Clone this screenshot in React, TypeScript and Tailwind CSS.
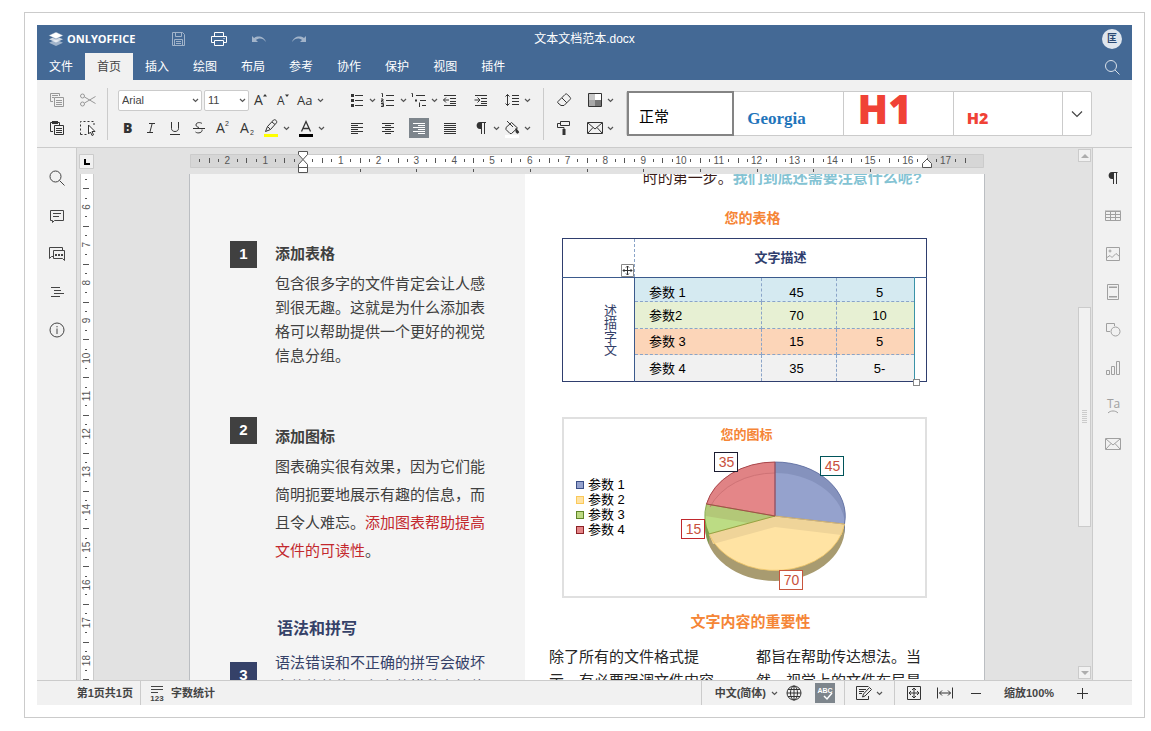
import React, { useState } from "react";

import { clsx } from "clsx";

type IconProps = { children: React.ReactNode; className?: string };

function Icon({ children, className }: IconProps) {
	return (
		<svg
			viewBox="0 0 20 20"
			fill="none"
			stroke="currentColor"
			aria-hidden="true"
			className={clsx("size-5 shrink-0", className)}
		>
			{children}
		</svg>
	);
}

function Chevron() {
	return (
		<svg viewBox="0 0 11 20" fill="none" stroke="#555" className="h-5 w-[11px] shrink-0" aria-hidden="true">
			<path d="M3 9l2.5 2.5L8 9" strokeWidth="1.2" />
		</svg>
	);
}

type ToolProps = {
	label: string;
	children: React.ReactNode;
	menu?: boolean;
	active?: boolean;
	muted?: boolean;
};

function Tool({ label, children, menu, active, muted }: ToolProps) {
	return (
		<button
			type="button"
			aria-label={label}
			title={label}
			className={clsx("flex h-5 shrink-0 items-center", muted ? "text-[#989898]" : "text-[#333]")}
		>
			<span className={clsx("block size-5", active && "bg-[#7d858c] text-white")}>
				<Icon>{children}</Icon>
			</span>
			{menu && <Chevron />}
		</button>
	);
}

function Separator() {
	return <div className="h-[52px] w-px shrink-0 bg-[#cbcbcb]" />;
}

const TABS = ["文件", "首页", "插入", "绘图", "布局", "参考", "协作", "保护", "视图", "插件"];

function Header() {
	const [tab, setTab] = useState("首页");

	return (
		<header className="bg-[#446995] text-xs text-white">
			<div className="grid h-7 grid-cols-[1fr_auto_1fr] items-center">
				<div className="flex items-center pl-[11px]">
					<svg viewBox="0 0 16 16" className="size-4" aria-hidden="true">
						<path d="M8 8.6l7 3.1-7 3.3-7-3.3z" fill="#fff" opacity=".5" />
						<path d="M8 5.2l7 3.1-7 3.3-7-3.3z" fill="#fff" opacity=".75" />
						<path d="M8 1l7.4 3.5L8 8 .6 4.5z" fill="#fff" stroke="#446995" strokeWidth=".5" />
					</svg>
					<span className="w-[104px] pl-[3px] font-[Open_Sans,sans-serif] text-[11px] font-bold">
						ONLYOFFICE
					</span>
					<div className="flex gap-5">
						<button type="button" aria-label="保存" className="opacity-50">
							<Icon>
								<path d="M4.500 3.500h10l2 2v11h-12zM7.500 3.500v4h6v-4M6.500 16.500v-6h8v6M8 12.500h5M8 14.500h5" />
							</Icon>
						</button>
						<button type="button" aria-label="打印">
							<Icon>
								<path d="M6.500 7V3.500h9V7M6.500 13.500h-3v-6h15v6h-3M6.500 11.500h9v5h-9zM15.500 9.500h1" />
							</Icon>
						</button>
						<button type="button" aria-label="撤销" className="opacity-50">
							<Icon>
								<path d="M4 7v6h6L8 11c3-2.500 7-2 10 2-1.500-5-7.500-7-12-4z" fill="currentColor" stroke="none" />
							</Icon>
						</button>
						<button type="button" aria-label="重做" className="opacity-50">
							<Icon>
								<path d="M18 7v6h-6l2-2c-3-2.500-7-2-10 2 1.500-5 7.500-7 12-4z" fill="currentColor" stroke="none" />
							</Icon>
						</button>
					</div>
				</div>
				<h1>文本文档范本.docx</h1>
				<div className="flex justify-end pr-[10px]">
					<span className="flex size-5 items-center justify-center rounded-full bg-[#dfe6ee] text-[10px] leading-none font-bold text-[#2b4a73]">
						匡
					</span>
				</div>
			</div>
			<div className="flex h-[27px] items-stretch justify-between">
				<nav className="flex">
					{TABS.map((name) => (
						<button
							key={name}
							type="button"
							onClick={() => setTab(name)}
							className={clsx("px-3", tab === name && "bg-[#f1f1f1] text-[#444]")}
						>
							{name}
						</button>
					))}
				</nav>
				<button type="button" aria-label="搜索" className="pr-[10px]">
					<Icon className="opacity-80">
						<circle cx="9" cy="9" r="5.500" />
						<path d="M13 13l4.500 4.500" />
					</Icon>
				</button>
			</div>
		</header>
	);
}

function SelectBox({ label, value, className }: { label: string; value: string; className: string }) {
	return (
		<div
			className={clsx(
				"flex h-[21px] shrink-0 items-center rounded-xs border border-[#cbcbcb] bg-white text-[#444]",
				className,
			)}
		>
			<select aria-label={label} className="h-full min-w-0 flex-1 appearance-none pl-[3px] text-[11px] outline-none">
				<option>{value}</option>
			</select>
			<Chevron />
		</div>
	);
}

function FontTools() {
	return (
		<div className="flex w-[209px] flex-col gap-2">
			<div className="flex h-5 items-center gap-[2px]">
				<SelectBox label="字体" value="Arial" className="ml-px w-[84px]" />
				<SelectBox label="字号" value="11" className="w-[45px]" />
				<Tool label="增大字号">
					<text x="3" y="15" fontSize="14" fill="currentColor" stroke="none" className="font-[Open_Sans,sans-serif]">A</text>
					<path d="M12 6.500l2-2.500 2 2.500z" fill="currentColor" stroke="none" />
				</Tool>
				<Tool label="减小字号">
					<text x="4" y="15" fontSize="12" fill="currentColor" stroke="none" className="font-[Open_Sans,sans-serif]">A</text>
					<path d="M12 4.500l2 2.500 2-2.500z" fill="currentColor" stroke="none" />
				</Tool>
				<Tool label="更改大小写" menu>
					<text x="2" y="15" fontSize="13" fill="currentColor" stroke="none" className="font-[Open_Sans,sans-serif]">Aa</text>
				</Tool>
			</div>
			<div className="flex h-5 gap-1">
				<Tool label="加粗">
					<text x="6" y="15" fontSize="14" fontWeight="800" fill="currentColor" stroke="none" className="font-[Open_Sans,sans-serif]">B</text>
				</Tool>
				<Tool label="斜体">
					<path d="M8 5.500h6M6 14.500h6M11.200 5.500l-2.400 9" />
				</Tool>
				<Tool label="下划线">
					<path d="M6.500 4v6.500c0 4 7 4 7 0V4M5 16.500h10" />
				</Tool>
				<Tool label="删除线">
					<path d="M13 5.500c-1.500-1.300-6-1.500-6 1.500 0 1.500 1.500 2 3 2.500M4 10.500h12M13 11.500c1 3-4 4.500-6.500 2.500" />
				</Tool>
				<Tool label="上标">
					<text x="3" y="15" fontSize="14" fill="currentColor" stroke="none" className="font-[Open_Sans,sans-serif]">A</text>
					<text x="12" y="8" fontSize="7" fill="currentColor" stroke="none">2</text>
				</Tool>
				<Tool label="下标">
					<text x="3" y="15" fontSize="14" fill="currentColor" stroke="none" className="font-[Open_Sans,sans-serif]">A</text>
					<text x="13" y="17" fontSize="7" fill="currentColor" stroke="none">2</text>
				</Tool>
				<Tool label="高亮颜色" menu>
					<path d="M4.500 13.500l2-5 6-6.500c1.500-1 4 .8 3 2.800l-6 6.700zM6.500 8.500l3 3M11 4l3 2.500" />
					<path d="M3 16h14v3H3z" fill="#ff0" stroke="none" />
				</Tool>
				<Tool label="字体颜色" menu>
					<path d="M5.500 13.500l4.500-10 4.500 10M7 10.500h6" strokeWidth="1.300" />
					<path d="M3 16h14v3H3z" fill="#000" stroke="none" />
				</Tool>
			</div>
		</div>
	);
}

function ParagraphTools() {
	return (
		<div className="grid grid-cols-[repeat(6,31px)] gap-y-2">
			<Tool label="项目符号" menu>
				<path d="M8 5.500h8M8 10.500h8M8 15.500h8" />
				<path d="M4 4h3v3H4zM4 9h3v3H4zM4 14h3v3H4z" fill="currentColor" stroke="none" />
			</Tool>
			<Tool label="编号" menu>
				<path d="M8 5.500h8M8 10.500h8M8 15.500h8M3.500 3.500h1V7M3 9h2v1.500H3.500V12H6M3 13.500h2.500v3H3M3.500 15h2" />
			</Tool>
			<Tool label="多级列表" menu>
				<path d="M7 5.500h9M11 10.500h6M13 15.500h4M2.500 3.500h1V7M10.500 12.500V17" />
				<path d="M6 9.500h2v2H6z" fill="currentColor" stroke="none" />
			</Tool>
			<Tool label="减少缩进">
				<path d="M4 5.500h12M10 8.500h6M10 11.500h6M4 15.500h12M10 13.500h6M3.500 10h5.500M6 7.500L3.500 10 6 12.500" />
			</Tool>
			<Tool label="增加缩进">
				<path d="M4 5.500h12M10 8.500h6M10 11.500h6M4 15.500h12M10 13.500h6M3.500 10H9M6.500 7.500L9 10l-2.500 2.500" />
			</Tool>
			<Tool label="行间距" menu>
				<path d="M10 5.500h7M10 8.500h7M10 11.500h7M10 14.500h7M5.500 4.500v11M3.500 6.500l2-2 2 2M3.500 13.500l2 2 2-2" />
			</Tool>
			<Tool label="左对齐">
				<path d="M4 5.500h12M4 7.500h7M4 9.500h12M4 11.500h7M4 13.500h12M4 15.500h7" />
			</Tool>
			<Tool label="居中">
				<path d="M4 5.500h12M7 7.500h6M4 9.500h12M7 11.500h6M4 13.500h12M7 15.500h6" />
			</Tool>
			<Tool label="右对齐" active>
				<path d="M4 5.500h12M9 7.500h7M4 9.500h12M9 11.500h7M4 13.500h12M9 15.500h7" />
			</Tool>
			<Tool label="两端对齐">
				<path d="M4 5.500h12M4 7.500h12M4 9.500h12M4 11.500h12M4 13.500h12M4 15.500h12" />
			</Tool>
			<Tool label="非打印字符" menu>
				<path d="M9 4.500h6M10.500 4v12M13.500 4v12" />
				<path d="M10.500 4v7H9c-4.500 0-4.500-7 0-7z" fill="currentColor" stroke="none" />
			</Tool>
			<Tool label="底纹" menu>
				<path d="M4 9.500l5.500-5 6 5.500-6 5.500H8l-4-4zM5 3l6 6" />
				<path d="M14 10.500l2.500 3c1 2-2.500 2.500-2.500 0z" fill="currentColor" />
				<path d="M3 17h14v3H3z" fill="#fff" stroke="none" />
			</Tool>
		</div>
	);
}

function EnvelopeIcon() {
	return <path d="M2.500 4.500h15v11h-15zM3 5l7 6 7-6M3 15l5-5.500M17 15l-5-5.500" />;
}

function StyleGallery() {
	return (
		<div className="mt-px flex h-[45px] min-w-0 flex-1 rounded-xs border border-[#cbcbcb] bg-white">
			<button
				type="button"
				className="-my-px -mr-[2px] flex flex-1 items-center pt-2 pl-3 text-[15px] text-black ring-2 ring-[#848484] ring-inset"
			>
				正常
			</button>
			<button
				type="button"
				className="flex flex-1 items-center pt-[10px] pl-[15px] font-[Liberation_Serif,serif] text-[17px] font-bold text-[#1f75bb]"
			>
				Georgia
			</button>
			<button
				type="button"
				className="flex flex-1 items-center border-l border-[#cbcbcb] pb-[9px] pl-[14px] font-[Open_Sans,sans-serif] text-[40px] leading-none font-extrabold text-[#f04236]"
			>
				H1
			</button>
			<button
				type="button"
				className="flex flex-1 items-center border-l border-[#cbcbcb] pt-2 pl-[13px] font-[Open_Sans,sans-serif] text-base font-extrabold text-[#f04236]"
			>
				H2
			</button>
			<button
				type="button"
				aria-label="更多样式"
				className="flex w-[29px] items-center justify-center border-l border-[#cbcbcb] text-[#444]"
			>
				<Icon>
					<path d="M5 7.500l5 5 5-5" strokeWidth="1.200" />
				</Icon>
			</button>
		</div>
	);
}

function Toolbar() {
	return (
		<div className="flex h-[68px] shrink-0 items-start border-b border-[#cbcbcb] bg-[#f1f1f1] pt-2 pr-10 pl-[10px]">
			<div className="mt-[2px] mr-[9px] grid grid-cols-2 gap-x-[11px] gap-y-2">
				<Tool label="复制" muted>
					<path d="M6 11.500H3.500v-8h9V6M5 5.500h6M5 7.500h2M7.500 7.500h9v9h-9zM9 10.500h6M9 12.500h6M9 14.500h6" />
				</Tool>
				<Tool label="剪切" muted>
					<circle cx="4.500" cy="6" r="2" />
					<circle cx="4.500" cy="14" r="2" />
					<path d="M6.500 7l11 6.500M6.500 13l11-6.500" />
				</Tool>
				<Tool label="粘贴">
					<path d="M6 13.500H3.500v-9h9V7M7.500 7.500h9v9h-9zM9 10.500h6M9 12.500h6M9 14.500h6" />
					<path d="M5 3h6v3H5z" fill="currentColor" stroke="none" />
				</Tool>
				<Tool label="全选">
					<path d="M2.500 16.500h7M2.500 16.500v-13h13.500V7" strokeDasharray="2 2" />
					<path d="M10.500 7v9l2-2 1.500 3.500 1.500-.7-1.500-3.300h3z" fill="#fff" />
				</Tool>
			</div>
			<Separator />
			<div className="mt-[2px] mr-[21px] ml-[9px]">
				<FontTools />
			</div>
			<div className="mt-[2px] mr-[10px]">
				<ParagraphTools />
			</div>
			<Separator />
			<div className="mx-[10px] mt-[2px] grid grid-cols-[repeat(2,31px)] gap-y-2">
				<Tool label="清除样式">
					<path d="M4 11.500l7-7c1-.8 1.500-.8 2.300 0l2.700 2.700c.8.800.8 1.500 0 2.300l-6 6H7l-3-2.500c-.5-.5-.5-1 0-1.500zM8 8l4.800 4.800" />
				</Tool>
				<Tool label="更改配色方案" menu>
					<path d="M4 4h6v6H4z" fill="#c8c8c8" stroke="none" />
					<path d="M10 4h6v6h-6z" fill="#fff" stroke="none" />
					<path d="M4 10h6v6H4z" fill="#a8a8a8" stroke="none" />
					<path d="M10 10h6v6h-6z" fill="#777" stroke="none" />
					<path d="M3.500 3.500h13v13h-13z" />
				</Tool>
				<Tool label="复制样式">
					<path d="M6.500 3.500h9v4h-9zM6.500 5.500h-3v4h6.500v2" />
					<path d="M8.500 11h3v6h-3z" fill="currentColor" stroke="none" />
				</Tool>
				<Tool label="邮件合并" menu>
					<EnvelopeIcon />
				</Tool>
			</div>
			<div className="mt-[2px] flex min-w-0 flex-1">
				<StyleGallery />
			</div>
		</div>
	);
}

function SideButton({ label, children }: { label: string; children: React.ReactNode }) {
	return (
		<button type="button" aria-label={label} className="flex h-[38px] w-full shrink-0 items-center justify-center">
			<Icon>{children}</Icon>
		</button>
	);
}

function LeftBar() {
	return (
		<aside className="w-10 shrink-0 overflow-hidden border-r border-[#cbcbcb] bg-[#f1f1f1] pt-[11px] text-[#444]">
			<SideButton label="查找">
				<circle cx="8.500" cy="8.500" r="5.500" />
				<path d="M12.500 12.500l5 5" />
			</SideButton>
			<SideButton label="批注">
				<path d="M3.500 4.500h13v10h-9L5.500 16.500v-2h-2zM6 7.500h8M6 10.500h6" />
			</SideButton>
			<SideButton label="聊天">
				<path d="M6 12.500H4.500l-2 2v-11h13V6M6.500 6.500h11v10l-2-2h-9z" />
				<path d="M8 10h2v2H8zM11 10h2v2h-2zM14 10h2v2h-2z" fill="currentColor" stroke="none" />
			</SideButton>
			<SideButton label="导航">
				<path d="M4 5.500h9M7 8.500h7M7 11.500h10M4 14.500h9" />
			</SideButton>
			<SideButton label="关于">
				<circle cx="10" cy="10" r="7" />
				<path d="M10 8.500V14M10 6v1.300" />
			</SideButton>
		</aside>
	);
}

function RightBar() {
	return (
		<aside className="w-10 shrink-0 overflow-hidden border-l border-[#cbcbcb] bg-[#f1f1f1] pt-[11px] text-[#a0a0a0]">
			<div className="text-[#333]">
				<SideButton label="段落设置">
					<path d="M9 4.500h5.500M10.500 4v12M13.500 4v12" />
					<path d="M10.500 4v7H9C4.500 11 4.500 4 9 4z" fill="currentColor" stroke="none" />
				</SideButton>
			</div>
			<SideButton label="表格设置">
				<path d="M2.500 5.500h15v9h-15zM2.500 8.500h15M2.500 11.500h15M7.500 5v10M12.500 5v10M2 5h16" />
			</SideButton>
			<SideButton label="图片设置">
				<path d="M3.500 3.500h13v13h-13zM4 13.500l3-2 2 2 4-4 3.500 3" />
				<circle cx="7" cy="7" r="1" />
			</SideButton>
			<SideButton label="页眉页脚">
				<path d="M4.500 2.500h11v15h-11z" />
				<path d="M6 4.500h8v1.500H6zM6 14h8v1.500H6z" fill="currentColor" stroke="none" />
			</SideButton>
			<SideButton label="形状设置">
				<path d="M7 11.500H3.500v-8h8V6" />
				<circle cx="12.500" cy="11.500" r="4.500" />
			</SideButton>
			<SideButton label="图表设置">
				<path d="M3.500 12.500h3v4h-3zM8.500 8.500h3v8h-3zM13.500 3.500h3v13h-3z" />
			</SideButton>
			<SideButton label="艺术字设置">
				<text x="4" y="12" fontSize="12" fill="currentColor" stroke="none" className="font-[Open_Sans,sans-serif]">Ta</text>
				<path d="M5 17c2.500-2.700 7.500-2.700 10 0" />
			</SideButton>
			<SideButton label="邮件合并设置">
				<EnvelopeIcon />
			</SideButton>
		</aside>
	);
}

// one centimetre on screen
const CM = 37.8;

function HorizontalRuler() {
	const zero = 114;
	const quarters = Array.from({ length: 82 }, (_, i) => i - 11);

	return (
		<svg viewBox="0 0 796 26" className="h-[26px] w-[796px] shrink-0" aria-hidden="true">
			<path d="M1.500 6.500h793v13h-793z" fill="#d6d6d6" stroke="#cbcbcb" />
			<path d="M114 7h624v12H114z" fill="#fff" />
			{quarters.map((q) => {
				const x = zero + (q * CM) / 4;
				if (q === 0) return null;
				if (q % 4 === 0) {
					return (
						<text key={q} x={x} y="16" fontSize="10" fill="#555" textAnchor="middle">
							{Math.abs(q / 4)}
						</text>
					);
				}
				const half = q % 2 === 0;
				return (
					<rect key={q} x={Math.round(x)} y={half ? 10 : 11} width="1" height={half ? 5 : 3} fill="#555" />
				);
			})}
			{Array.from({ length: 10 }, (_, i) => (
				<rect key={i} x={Math.round(zero + (i + 1) * CM * 1.5)} y="21" width="1" height="3" fill="#555" />
			))}
			<path d="M109.500 3.500h9v3l-4.500 5-4.500-5zM109.500 24.500v-8l4.500-5 4.500 5v8zM109.500 19.500h9" fill="#fff" stroke="#555" />
			<path d="M733.500 19.500v-4l4.500-4.500 4.500 4.500v4z" fill="#fff" stroke="#555" />
		</svg>
	);
}

function VerticalRuler() {
	const quarters = Array.from({ length: 54 }, (_, i) => i + 21);

	return (
		<svg className="h-full w-[14px]" aria-hidden="true">
			<rect width="14" height="100%" fill="#fff" />
			<path d="M.5 0v2000M13.500 0v2000" stroke="#cbcbcb" />
			{quarters.map((q) => {
				const y = 33 + (q / 4 - 6) * CM;
				if (q % 4 === 0) {
					return (
						<text key={q} fontSize="10" fill="#555" textAnchor="middle" transform={`translate(10 ${y}) rotate(-90)`}>
							{q / 4}
						</text>
					);
				}
				const half = q % 2 === 0;
				return (
					<rect key={q} x={half ? 3 : 5} y={Math.round(y)} width={half ? 6 : 2} height="1" fill="#555" />
				);
			})}
		</svg>
	);
}

type SectionProps = { number: number; className?: string; badge: string; children: React.ReactNode };

function Section({ number, className, badge, children }: SectionProps) {
	return (
		<section className={clsx("flex items-start", className)}>
			<span
				className={clsx(
					"flex h-[27px] w-[27px] shrink-0 items-center justify-center text-[15px] font-bold text-white",
					badge,
				)}
			>
				{number}
			</span>
			<div className="ml-[18px] shrink-0 whitespace-nowrap">{children}</div>
		</section>
	);
}

function Sidebar() {
	return (
		<div className="w-[335px] shrink-0 bg-[#f4f4f4] pt-[67px] pl-10 text-[15px] text-[#404040]">
			<Section number={1} badge="bg-[#404040]">
				<h2 className="mt-px mb-[6px] leading-6 font-bold">添加表格</h2>
				<p className="leading-6">
					包含很多字的文件肯定会让人感
					<br />
					到很无趣。这就是为什么添加表
					<br />
					格可以帮助提供一个更好的视觉
					<br />
					信息分组。
				</p>
			</Section>
			<Section number={2} badge="bg-[#404040]" className="mt-[49px]">
				<h2 className="mt-2 mb-1 leading-6 font-bold">添加图标</h2>
				<p className="leading-7">
					图表确实很有效果，因为它们能
					<br />
					简明扼要地展示有趣的信息，而
					<br />
					且令人难忘。
					<span className="text-[#c3282d]">
						添加图表帮助提高
						<br />
						文件的可读性
					</span>
					。
				</p>
			</Section>
			<h2 className="mt-[52px] ml-[47px] text-base leading-6 font-bold text-[#354168]">语法和拼写</h2>
			<Section number={3} badge="mt-[11px] bg-[#354168]" className="mt-[10px]">
				<p className="leading-6 text-[#354168]">
					语法错误和不正确的拼写会破坏
					<br />
					文件的整体，在文件措辞上加倍
				</p>
			</Section>
		</div>
	);
}

const ROWS = [
	{ name: "参数 1", a: "45", b: "5", className: "h-[24px] bg-[#d5eaf1]", pad: "pt-[6px]" },
	{ name: "参数2", a: "70", b: "10", className: "h-[27px] bg-[#e7f0d3]", pad: "pt-px" },
	{ name: "参数 3", a: "15", b: "5", className: "h-[26px] bg-[#fcd5b8]", pad: "pt-px" },
	{ name: "参数 4", a: "35", b: "5-", className: "h-[27px] bg-[#f1f1f1]", pad: "pt-px" },
];

function DataTable() {
	const dashed = "border border-dashed border-[#8aa4c8] pb-0";

	return (
		<div className="relative">
			<table className="w-full table-fixed border-collapse border border-[#2f3e6e] text-[13px] leading-4 text-black">
				<colgroup>
					<col className="w-[72px]" />
					<col className="w-[127px]" />
					<col className="w-[75px]" />
					<col className="w-[78px]" />
					<col />
				</colgroup>
				<tbody>
					<tr className="h-[39px] border-b border-[#3b5a8c]">
						<td className="border-r border-dashed border-r-[#8aa4c8] p-0" />
						<th colSpan={4} className="p-0 font-bold text-[#2f3e6e]">
							文字描述
						</th>
					</tr>
					{ROWS.map((row, i) => (
						<tr key={row.name}>
							{i === 0 && (
								<th rowSpan={4} className="border-r border-[#3b5a8c] p-0 pl-[22px] font-normal text-[#354168]">
									<span className="inline-block align-middle leading-none [writing-mode:vertical-rl]">
										述描字文
									</span>
								</th>
							)}
							<td className={clsx(dashed, "border-l-0 pr-0 pl-[14px]", row.className, row.pad)}>{row.name}</td>
							<td className={clsx(dashed, "pr-[5px] pl-0 text-center", row.className, row.pad)}>{row.a}</td>
							<td className={clsx(dashed, "border-r-0 pr-0 pl-2 text-center", row.className, row.pad)}>{row.b}</td>
							{i === 0 && <td rowSpan={4} className="border-l border-[#3a93a8] p-0" />}
						</tr>
					))}
				</tbody>
			</table>
			<svg viewBox="0 0 13 13" fill="none" className="absolute top-[26px] left-[59px] size-[13px]" aria-hidden="true">
				<path d="M.5.5h12v12H.5z" fill="#fff" stroke="#888" />
				<path d="M6.500 2v9M2 6.500h9M5 3.500l1.500-1.500L8 3.500M5 9.500L6.500 11 8 9.500M3.500 5L2 6.500 3.500 8M9.500 5L11 6.500 9.500 8" stroke="#333" />
			</svg>
			<span className="absolute right-[7px] -bottom-1 size-[7px] border border-[#888] bg-white" />
		</div>
	);
}

const LEGEND = [
	{ name: "参数 1", className: "border-[#3b4f87] bg-[#95a2cd]" },
	{ name: "参数 2", className: "border-[#fbc95a] bg-[#ffe3a3]" },
	{ name: "参数 3", className: "border-[#5f8428] bg-[#bcd982]" },
	{ name: "参数 4", className: "border-[#8c2226] bg-[#e48688]" },
];

const LABELS = [
	{ value: 35, x: 38.5, y: 7.5, stroke: "#1b1b30" },
	{ value: 45, x: 144.5, y: 11.5, stroke: "#00545a" },
	{ value: 15, x: 5.5, y: 74.5, stroke: "#c0282d" },
	{ value: 70, x: 103.5, y: 125.5, stroke: "#c8553d" },
];

function PieChart() {
	return (
		<svg viewBox="0 0 180 151" className="h-[151px] w-[180px] shrink-0" aria-hidden="true">
			{/* side wall */}
			<path d="M29 71v11A70 54 0 0 0 169 82V71z" fill="#a89b70" />
			<path d="M29 71v11A70 54 0 0 0 33 99V89z" fill="#7f9c50" />
			<path d="M169 71v11l-1 7v-11z" fill="#6c7796" />
			{/* slices */}
			<path d="M99 71V17A70 54 0 0 1 168.500 79z" fill="#95a2cd" />
			<path d="M99 71L168.500 79A70 54 0 0 1 33 89z" fill="#ffe3a3" />
			<path d="M99 71L33 89A70 54 0 0 1 30.500 59z" fill="#bcdc84" />
			<path d="M99 71L30.500 59A70 54 0 0 1 99 17z" fill="#e48688" />
			{/* back wall seen through the slices */}
			<path d="M99 17A70 54 0 0 1 168.500 79v-4A70 54 0 0 0 99 28z" fill="#8592bd" />
			<path d="M30.500 59A70 54 0 0 1 99 17v11A70 54 0 0 0 34 62z" fill="#e08385" />
			<path d="M99 71l69.500 8-3 11L99 82z" fill="#efd499" />
			<path d="M99 71L33 89l4 10 62-17z" fill="#efd499" />
			<path d="M99 71L30.500 59l-1 12 43 7z" fill="#b3c878" />
			<path d="M34 62A70 54 0 0 1 99 28" fill="none" stroke="#cf7376" />
			{/* outlines */}
			<path d="M99 71V17A70 54 0 0 1 168.500 79z" fill="none" stroke="#5d6c9e" strokeWidth=".8" />
			<path d="M168.500 79A70 54 0 0 1 33 89L99 71z" fill="none" stroke="#f0c566" strokeWidth=".8" />
			<path d="M99 71L33 89A70 54 0 0 1 30.500 59z" fill="none" stroke="#789a3c" strokeWidth=".8" />
			<path d="M99 71L30.500 59A70 54 0 0 1 99 17z" fill="none" stroke="#a8484c" />
			{LABELS.map((l) => (
				<g key={l.value}>
					<rect x={l.x} y={l.y} width="23" height="19" fill="#fff" stroke={l.stroke} />
					<text x={l.x + 12} y={l.y + 14.5} fontSize="14" fill="#c8503c" textAnchor="middle">
						{l.value}
					</text>
				</g>
			))}
		</svg>
	);
}

function ChartFigure() {
	return (
		<figure className="mt-[35px] border-2 border-[#e0e0e0] pt-[6px]">
			<figcaption className="pl-1 text-center text-[13px] leading-5 font-bold text-[#f58536]">您的图标</figcaption>
			<div className="flex">
				<ul className="w-28 shrink-0 pt-8 pl-3 text-[13px] leading-[15px] text-black">
					{LEGEND.map((item) => (
						<li key={item.name} className="flex items-center gap-1">
							<span className={clsx("size-2 border", item.className)} />
							{item.name}
						</li>
					))}
				</ul>
				<PieChart />
			</div>
		</figure>
	);
}

function Article() {
	return (
		<div className="min-w-0 flex-1 bg-white pr-[57px] pl-6 text-[15px]">
			<div className="ml-[13px]">
				<p className="-mt-2 pr-[5px] text-right leading-6 whitespace-nowrap text-[#3a1d18]">
					时的第一步。<b className="text-[#84c3d3]">我们到底还需要注意什么呢?</b>
				</p>
				<h2 className="mt-[18px] mb-[10px] pl-4 text-center text-sm leading-5 font-bold text-[#f58536]">
					您的表格
				</h2>
				<DataTable />
				<ChartFigure />
				<h2 className="mt-[14px] mb-[13px] pl-3 text-center leading-5 font-bold text-[#f58536]">
					文字内容的重要性
				</h2>
			</div>
			<div className="grid grid-cols-[207px_1fr] leading-6 whitespace-nowrap text-[#262626]">
				<p>
					除了所有的文件格式提
					<br />
					示，有必要强调文件内容
				</p>
				<p>
					都旨在帮助传达想法。当
					<br />
					然，视觉上的文件布局是
				</p>
			</div>
		</div>
	);
}

function ScrollButton({ label, d }: { label: string; d: string }) {
	return (
		<button
			type="button"
			aria-label={label}
			className="flex size-[13px] shrink-0 items-center justify-center border border-[#cbcbcb] bg-[#f1f1f1]"
		>
			<svg viewBox="0 0 8 4" className="h-1 w-2" aria-hidden="true">
				<path d={d} fill="#adadad" />
			</svg>
		</button>
	);
}

function Canvas() {
	return (
		<main className="flex min-w-0 flex-1 bg-[#e2e2e2]">
			<div className="flex min-w-0 flex-1 flex-col overflow-hidden">
				<div className="flex h-[26px] shrink-0">
					<div className="w-[19px] shrink-0 pt-[6px] pl-[2px]">
						<svg viewBox="0 0 15 15" className="size-[15px]" aria-hidden="true">
							<path d="M.5.5h14v14H.5z" fill="#f1f1f1" stroke="#cbcbcb" />
							<path d="M6 5v5h5" fill="none" stroke="#000" strokeWidth="2" />
						</svg>
					</div>
					<div className="flex min-w-0 flex-1 justify-center">
						<HorizontalRuler />
					</div>
				</div>
				<div className="flex min-h-0 flex-1">
					<div className="w-[19px] shrink-0 pl-[3px]">
						<VerticalRuler />
					</div>
					<div className="flex min-w-0 flex-1 justify-center overflow-hidden">
						<article className="flex w-[796px] shrink-0 overflow-hidden border-x border-[#bbbec2]">
							<Sidebar />
							<Article />
						</article>
					</div>
				</div>
			</div>
			<div className="flex w-[14px] shrink-0 flex-col py-px">
				<ScrollButton label="向上滚动" d="M0 4l4-4 4 4z" />
				<div className="grow-[146]" />
				<div className="flex w-[13px] grow-[218] basis-0 flex-col items-center justify-center gap-px border border-[#cbcbcb] bg-[#f1f1f1]">
					{[0, 1, 2, 3, 4, 5, 6].map((i) => (
						<span key={i} className="h-px w-[5px] bg-[#cbcbcb]" />
					))}
				</div>
				<div className="grow-[140]" />
				<ScrollButton label="向下滚动" d="M0 0l4 4 4-4z" />
			</div>
		</main>
	);
}

function StatusBar() {
	const divider = "h-full w-px shrink-0 bg-[#cbcbcb]";

	return (
		<footer className="flex h-[25px] shrink-0 items-center border-t border-[#cbcbcb] bg-[#f1f1f1] text-[11px] font-bold text-[#444]">
			<button type="button" className="w-[103px] pr-[7px] text-right">
				第1页共1页
			</button>
			<div className={divider} />
			<button type="button" className="flex items-center gap-1 pl-[6px]">
				<Icon>
					<path d="M4 3.500h12M4 6.500h12M4 9.500h7" />
					<text x="10" y="18" fontSize="8" textAnchor="middle" fill="currentColor" stroke="none">123</text>
				</Icon>
				字数统计
			</button>
			<div className="flex-1" />
			<div className={divider} />
			<button type="button" className="ml-[13px] flex items-center gap-[3px]">
				中文(简体)
				<Chevron />
			</button>
			<div className="ml-1 flex gap-[11px]">
				<Tool label="设置文档语言">
					<circle cx="10" cy="10" r="7" />
					<ellipse cx="10" cy="10" rx="3.500" ry="7" />
					<path d="M10 3v14M3 10h14M4 6.500h12M4 13.500h12" />
				</Tool>
				<Tool label="拼写检查" active>
					<text x="10" y="10" fontSize="7" textAnchor="middle" fill="currentColor" stroke="none">ABC</text>
					<path d="M9 13l3 3 5-6" strokeWidth="1.500" />
				</Tool>
			</div>
			<div className={clsx(divider, "ml-[9px]")} />
			<div className="mx-[9px]">
				<Tool label="跟踪修订" menu>
					<path d="M14.500 13v3.500h-12v-13h12M5 6.500h7M5 8.500h5M5 10.500h3" />
					<path d="M8.500 14l1-3 6-6.500 2 2-6.500 6.500z" />
				</Tool>
			</div>
			<div className={divider} />
			<div className="ml-[9px] flex gap-[11px]">
				<Tool label="适合页面">
					<path d="M3.500 3.500h13v13h-13zM10 5v10M5 10h10M8 7l2-2 2 2M8 13l2 2 2-2M7 8l-2 2 2 2M13 8l2 2-2 2" />
				</Tool>
				<Tool label="适合宽度">
					<path d="M2.500 4.500v11M17.500 4.500v11M4.500 10h11M7 7.500L4.500 10 7 12.500M13 7.500l2.500 2.500-2.500 2.500" />
				</Tool>
				<Tool label="缩小">
					<path d="M5 10.500h10" />
				</Tool>
			</div>
			<button type="button" className="w-[86px] text-center">
				缩放100%
			</button>
			<div className="mr-10">
				<Tool label="放大">
					<path d="M5 10.500h11M10.500 5v11" />
				</Tool>
			</div>
		</footer>
	);
}

export default function App() {
	return (
		<div className="h-screen bg-white pt-3 pr-[6px] pb-[13px] pl-6 font-[Liberation_Sans,Noto_Sans_CJK_SC,sans-serif]">
			<div className="h-full border border-[#cbcbcb] p-3">
				<div className="flex h-full flex-col overflow-hidden">
					<Header />
					<Toolbar />
					<div className="flex min-h-0 flex-1">
						<LeftBar />
						<Canvas />
						<RightBar />
					</div>
					<StatusBar />
				</div>
			</div>
		</div>
	);
}
